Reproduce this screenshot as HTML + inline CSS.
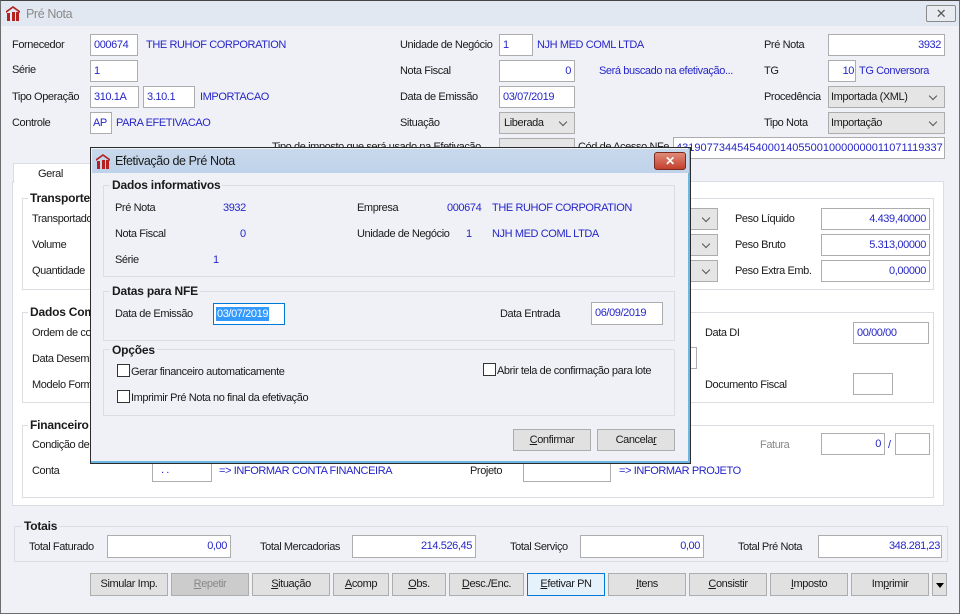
<!DOCTYPE html>
<html><head><meta charset="utf-8"><style>
*{box-sizing:border-box;margin:0;padding:0}
body{width:960px;height:614px;overflow:hidden;background:#f0f1f7;font-family:"Liberation Sans",sans-serif;font-size:11px;letter-spacing:-0.4px;color:#1a1a1a;position:relative}
.a{position:absolute;white-space:nowrap}
.l{position:absolute;white-space:nowrap;line-height:14px}
.b{color:#2626c8}
.in{position:absolute;background:#fff;border:1px solid #adadad;color:#2626c8;padding:0 3px;line-height:20px;white-space:nowrap;overflow:hidden}
.r{text-align:right}
.sel{position:absolute;background:#e5e5e5;border:1px solid #adadad;padding:0 4px;line-height:20px;white-space:nowrap;overflow:hidden}
.sel:after{content:"";position:absolute;right:8px;top:6px;width:5px;height:5px;border-right:1px solid #555;border-bottom:1px solid #555;transform:rotate(45deg)}
.grp{position:absolute;border:1px solid #dcdde3}
.gt{position:absolute;font-weight:bold;background:#f0f1f7;padding:0 2px;line-height:14px;font-size:12px;letter-spacing:-0.2px}
.btn{position:absolute;background:#e1e1e1;border:1px solid #adadad;text-align:center;line-height:21px;height:23px}
u{text-decoration:underline}
.cb{position:absolute;width:13px;height:13px;border:1px solid #333;background:#fff}
</style></head><body>
<div class="a" style="left:0;top:0;width:960px;height:614px;border:1px solid #6d6d6d;border-top-color:#444"></div>
<div class="a" style="left:1px;top:1px;width:958px;height:25px;background:#e1e8f1"></div>
<svg class="a" style="left:6px;top:6px" width="14" height="15" viewBox="0 0 14 15"><path d="M0 5 L7 0 L14 5 L14 7 L7 2 L0 7Z" fill="#b52020"/><rect x="1" y="7" width="3" height="8" fill="#b52020"/><rect x="6" y="6" width="3" height="9" fill="#b52020"/><rect x="10" y="6" width="3" height="9" fill="#b52020"/></svg>
<div class="l" style="left:26px;top:7px;font-size:12.5px;color:#8a8a8a">Pré Nota</div>
<div class="a" style="left:926px;top:5px;width:30px;height:17px;border:1px solid #8a8a8a;border-radius:2px;background:#e8ecf1;text-align:center;line-height:15px;color:#555;font-size:13px">✕</div>

<div class="l" style="left:12px;top:38px">Fornecedor</div><div class="in" style="left:90px;top:34px;width:48px;height:22px">000674</div><div class="l b" style="left:146px;top:38px">THE RUHOF CORPORATION</div>
<div class="l" style="left:12px;top:63px">Série</div><div class="in" style="left:90px;top:60px;width:48px;height:22px">1</div>
<div class="l" style="left:12px;top:90px">Tipo Operação</div><div class="in" style="left:90px;top:86px;width:49px;height:22px">310.1A</div><div class="in" style="left:143px;top:86px;width:52px;height:22px">3.10.1</div><div class="l b" style="left:200px;top:90px">IMPORTACAO</div>
<div class="l" style="left:12px;top:116px">Controle</div><div class="in" style="left:90px;top:112px;width:22px;height:22px;padding:0 2px">AP</div><div class="l b" style="left:116px;top:116px">PARA EFETIVACAO</div>

<div class="l" style="left:400px;top:38px">Unidade de Negócio</div><div class="in" style="left:499px;top:34px;width:34px;height:22px">1</div><div class="l b" style="left:537px;top:38px">NJH MED COML LTDA</div>
<div class="l" style="left:400px;top:64px">Nota Fiscal</div><div class="in r" style="left:499px;top:60px;width:76px;height:22px">0</div><div class="l b" style="left:599px;top:64px">Será buscado na efetivação...</div>
<div class="l" style="left:400px;top:90px">Data de Emissão</div><div class="in" style="left:499px;top:86px;width:76px;height:22px">03/07/2019</div>
<div class="l" style="left:400px;top:116px">Situação</div><div class="sel" style="left:499px;top:112px;width:76px;height:22px">Liberada</div>
<div class="l" style="left:272px;top:140px">Tipo de imposto que será usado na Efetivação</div><div class="sel" style="left:499px;top:138px;width:76px;height:20px"></div>
<div class="l" style="left:578px;top:140px">Cód de Acesso NFe</div><div class="in" style="left:673px;top:137px;width:272px;height:22px;padding:0 2px;letter-spacing:0">43190773445454000140550010000000011071119337</div>

<div class="l" style="left:764px;top:38px">Pré Nota</div><div class="in r" style="left:828px;top:34px;width:117px;height:22px">3932</div>
<div class="l" style="left:764px;top:64px">TG</div><div class="in r" style="left:828px;top:60px;width:28px;height:22px;padding:0 1px">10</div><div class="l b" style="left:859px;top:64px">TG Conversora</div>
<div class="l" style="left:764px;top:90px">Procedência</div><div class="sel" style="left:828px;top:86px;width:117px;height:22px;padding:0 2px">Importada (XML)</div>
<div class="l" style="left:764px;top:116px">Tipo Nota</div><div class="sel" style="left:828px;top:112px;width:117px;height:22px;padding:0 2px">Importação</div>

<!-- tab panel -->
<div class="a" style="left:12px;top:181px;width:932px;height:325px;background:#fff;border:1px solid #dcdde3"></div>
<div class="a" style="left:13px;top:163px;width:80px;height:20px;background:#fff;border:1px solid #dcdde3;border-bottom:none"></div>
<div class="l" style="left:38px;top:167px">Geral</div>
<div class="grp" style="left:22px;top:198px;width:912px;height:92px"></div><div class="gt" style="left:28px;top:191px;background:#fff">Transporte</div>
<div class="l" style="left:32px;top:212px">Transportadora</div><div class="l" style="left:32px;top:238px">Volume</div><div class="l" style="left:32px;top:264px">Quantidade</div>
<div class="sel" style="left:640px;top:208px;width:78px;height:22px"></div><div class="sel" style="left:640px;top:234px;width:78px;height:22px"></div><div class="sel" style="left:640px;top:260px;width:78px;height:22px"></div>
<div class="l" style="left:735px;top:212px">Peso Líquido</div><div class="in r" style="left:821px;top:208px;width:109px;height:22px">4.439,40000</div>
<div class="l" style="left:735px;top:238px">Peso Bruto</div><div class="in r" style="left:821px;top:234px;width:109px;height:22px">5.313,00000</div>
<div class="l" style="left:735px;top:264px">Peso Extra Emb.</div><div class="in r" style="left:821px;top:260px;width:109px;height:22px">0,00000</div>

<div class="grp" style="left:22px;top:312px;width:912px;height:91px"></div><div class="gt" style="left:28px;top:305px;background:#fff">Dados Complementares</div>
<div class="l" style="left:32px;top:326px">Ordem de compra</div><div class="l" style="left:32px;top:352px">Data Desembaraço</div><div class="l" style="left:32px;top:378px">Modelo Formulário</div>
<div class="sel" style="left:640px;top:347px;width:57px;height:22px;background:#fff"></div>
<div class="l" style="left:705px;top:326px">Data DI</div><div class="in" style="left:853px;top:322px;width:76px;height:22px">00/00/00</div>
<div class="l" style="left:705px;top:378px">Documento Fiscal</div><div class="in" style="left:853px;top:373px;width:40px;height:22px"></div>

<div class="grp" style="left:22px;top:425px;width:912px;height:73px"></div><div class="gt" style="left:28px;top:418px;background:#fff">Financeiro</div>
<div class="l" style="left:32px;top:438px">Condição de pagamento</div>
<div class="l" style="left:760px;top:438px;color:#888">Fatura</div><div class="in r" style="left:821px;top:433px;width:64px;height:22px">0</div><div class="l b" style="left:888px;top:438px">/</div><div class="in" style="left:895px;top:433px;width:35px;height:22px"></div>
<div class="l" style="left:32px;top:464px">Conta</div><div class="in" style="left:152px;top:459px;width:60px;height:23px;padding-left:8px">. .</div><div class="l b" style="left:219px;top:464px">=&gt; INFORMAR CONTA FINANCEIRA</div>
<div class="l" style="left:470px;top:464px">Projeto</div><div class="in" style="left:523px;top:459px;width:88px;height:23px"></div><div class="l b" style="left:619px;top:464px">=&gt; INFORMAR PROJETO</div>

<!-- Totais -->
<div class="grp" style="left:14px;top:526px;width:934px;height:36px"></div><div class="gt" style="left:22px;top:519px">Totais</div>
<div class="l" style="left:29px;top:540px">Total Faturado</div><div class="in r" style="left:107px;top:535px;width:124px;height:23px">0,00</div>
<div class="l" style="left:260px;top:540px">Total Mercadorias</div><div class="in r" style="left:352px;top:535px;width:124px;height:23px">214.526,45</div>
<div class="l" style="left:510px;top:540px">Total Serviço</div><div class="in r" style="left:580px;top:535px;width:124px;height:23px">0,00</div>
<div class="l" style="left:738px;top:540px">Total Pré Nota</div><div class="in r" style="left:818px;top:535px;width:124px;height:23px;padding:0 1px">348.281,23</div>

<div class="btn" style="left:90px;top:573px;width:78px">Simular Imp.</div>
<div class="btn" style="left:171px;top:573px;width:78px;background:#ccc;color:#888"><u>R</u>epetir</div>
<div class="btn" style="left:252px;top:573px;width:78px"><u>S</u>ituação</div>
<div class="btn" style="left:333px;top:573px;width:56px"><u>A</u>comp</div>
<div class="btn" style="left:392px;top:573px;width:54px"><u>O</u>bs.</div>
<div class="btn" style="left:449px;top:573px;width:75px"><u>D</u>esc./Enc.</div>
<div class="btn" style="left:527px;top:573px;width:78px;border-color:#0078d7;background:#e5f1fb"><u>E</u>fetivar PN</div>
<div class="btn" style="left:608px;top:573px;width:78px"><u>I</u>tens</div>
<div class="btn" style="left:689px;top:573px;width:78px"><u>C</u>onsistir</div>
<div class="btn" style="left:770px;top:573px;width:78px"><u>I</u>mposto</div>
<div class="btn" style="left:851px;top:573px;width:78px">Im<u>p</u>rimir</div>
<div class="btn" style="left:932px;top:573px;width:15px"><div style="position:absolute;left:3px;top:9px;border-left:4px solid transparent;border-right:4px solid transparent;border-top:5px solid #000"></div></div>

<!-- dialog -->
<div class="a" style="left:90px;top:147px;width:601px;height:317px;border:1px solid #2b2b2b;background:#f0f1f7;box-shadow:inset -2px -2px 0 #6bb7e0"></div>
<div class="a" style="left:92px;top:149px;width:597px;height:24px;background:linear-gradient(#c9d9ec,#bed2ea)"></div>
<svg class="a" style="left:96px;top:154px" width="14" height="15" viewBox="0 0 14 15"><path d="M0 5 L7 0 L14 5 L14 7 L7 2 L0 7Z" fill="#b52020"/><rect x="1" y="7" width="3" height="8" fill="#b52020"/><rect x="6" y="6" width="3" height="9" fill="#b52020"/><rect x="10" y="6" width="3" height="9" fill="#b52020"/></svg>
<div class="l" style="left:115px;top:154px;font-size:12.5px">Efetivação de Pré Nota</div>
<div class="a" style="left:654px;top:152px;width:32px;height:18px;background:linear-gradient(#e08a7a,#c2402c);border:1px solid #7a2a20;border-radius:3px;color:#fff;text-align:center;line-height:16px;font-weight:bold;font-size:12px">✕</div>

<div class="grp" style="left:103px;top:185px;width:572px;height:92px"></div><div class="gt" style="left:110px;top:178px">Dados informativos</div>
<div class="l" style="left:115px;top:201px">Pré Nota</div><div class="l b" style="left:223px;top:201px">3932</div>
<div class="l" style="left:357px;top:201px">Empresa</div><div class="l b" style="left:447px;top:201px">000674</div><div class="l b" style="left:492px;top:201px">THE RUHOF CORPORATION</div>
<div class="l" style="left:115px;top:227px">Nota Fiscal</div><div class="l b" style="left:240px;top:227px">0</div>
<div class="l" style="left:357px;top:227px">Unidade de Negócio</div><div class="l b" style="left:466px;top:227px">1</div><div class="l b" style="left:492px;top:227px">NJH MED COML LTDA</div>
<div class="l" style="left:115px;top:253px">Série</div><div class="l b" style="left:213px;top:253px">1</div>

<div class="grp" style="left:103px;top:291px;width:572px;height:50px"></div><div class="gt" style="left:110px;top:284px">Datas para NFE</div>
<div class="l" style="left:115px;top:307px">Data de Emissão</div>
<div class="a" style="left:213px;top:303px;width:72px;height:22px;border:1px solid #0078d7;background:#fff"><span style="position:absolute;left:2px;top:3px;background:#3399ff;color:#fff;line-height:14px;padding:0 1px">03/07/2019</span></div>
<div class="l" style="left:500px;top:307px">Data Entrada</div><div class="in" style="left:591px;top:302px;width:72px;height:23px">06/09/2019</div>

<div class="grp" style="left:103px;top:349px;width:572px;height:67px"></div><div class="gt" style="left:110px;top:343px">Opções</div>
<div class="cb" style="left:117px;top:364px"></div><div class="l" style="left:131px;top:365px">Gerar financeiro automaticamente</div>
<div class="cb" style="left:117px;top:390px"></div><div class="l" style="left:131px;top:391px">Imprimir Pré Nota no final da efetivação</div>
<div class="cb" style="left:483px;top:363px"></div><div class="l" style="left:497px;top:364px">Abrir tela de confirmação para lote</div>

<div class="btn" style="left:513px;top:429px;width:78px;height:22px;line-height:20px"><u>C</u>onfirmar</div>
<div class="btn" style="left:597px;top:429px;width:78px;height:22px;line-height:20px">Cancela<u>r</u></div>
</body></html>
